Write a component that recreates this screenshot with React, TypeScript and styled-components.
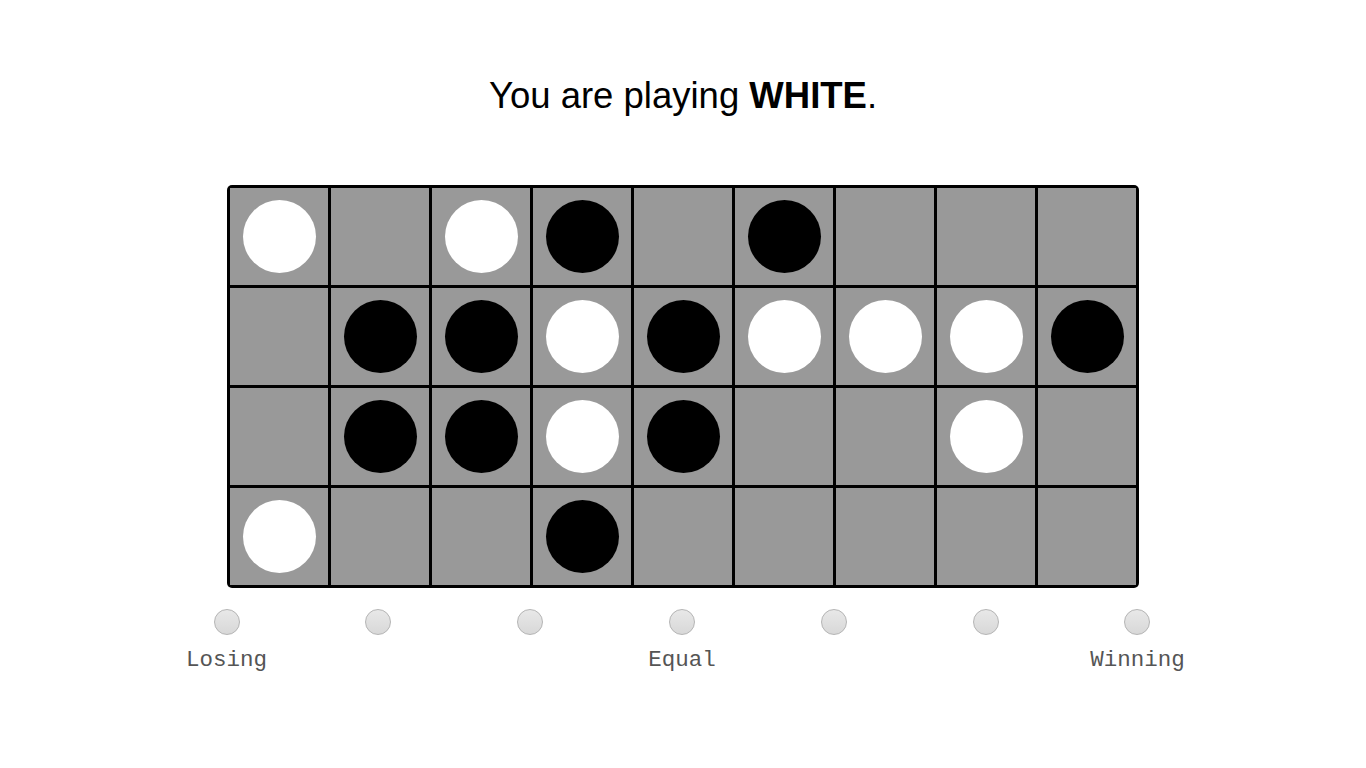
import React from 'react'
import styled, { createGlobalStyle } from 'styled-components'

const GlobalStyle = createGlobalStyle`
  html, body {
    margin: 0;
    padding: 0;
    background: #ffffff;
  }
  body {
    font-family: 'Liberation Sans', Arial, sans-serif;
  }
`

const Wrapper = styled.main`
  display: flex;
  flex-direction: column;
  align-items: center;
  width: 1366px;
  height: 768px;
  padding-top: 75px;
  box-sizing: border-box;
`

const Title = styled.h1`
  margin: 0 0 69px 0;
  font-size: 36.5px;
  font-weight: normal;
  line-height: 41px;
  color: #000;
  b {
    font-weight: bold;
  }
`

const Board = styled.div`
  display: grid;
  grid-template-columns: repeat(9, 98px);
  grid-template-rows: repeat(4, 97px);
  gap: 3px;
  padding: 3px;
  background: #000;
  border-radius: 5px;
`

const Cell = styled.div`
  display: flex;
  align-items: center;
  justify-content: center;
  background: #999999;
`

const Stone = styled.div<{ $color: 'w' | 'b' }>`
  width: 73px;
  height: 73px;
  border-radius: 50%;
  background: ${(p) => (p.$color === 'w' ? '#ffffff' : '#000000')};
`

const Meter = styled.div`
  display: flex;
  justify-content: space-between;
  width: 1011px;
  margin-top: 21px;
  margin-left: -2px;
`

const Slot = styled.div`
  display: flex;
  flex-direction: column;
  align-items: center;
  width: 100px;
`

const Dot = styled.div`
  width: 24px;
  height: 24px;
  border-radius: 50%;
  border: 1px solid #b4b4b4;
  background: linear-gradient(#e8e8e8, #d8d8d8);
`

const Label = styled.span`
  margin-top: 12px;
  font-family: 'Liberation Mono', 'Courier New', monospace;
  font-size: 22.5px;
  line-height: 26px;
  color: #555555;
  white-space: nowrap;
`

const rows = [
  'w.wb.b...',
  '.bbwbwwwb',
  '.bbwb..w.',
  'w..b.....',
]

const labels: Record<number, string> = { 0: 'Losing', 3: 'Equal', 6: 'Winning' }

export default function App() {
  return (
    <>
      <GlobalStyle />
      <Wrapper>
        <Title>
          You are playing <b>WHITE</b>.
        </Title>
        <Board>
          {rows.map((row, r) =>
            row.split('').map((c, i) => (
              <Cell key={`${r}-${i}`}>
                {c !== '.' && <Stone $color={c as 'w' | 'b'} />}
              </Cell>
            ))
          )}
        </Board>
        <Meter>
          {Array.from({ length: 7 }).map((_, i) => (
            <Slot key={i}>
              <Dot />
              {labels[i] && <Label>{labels[i]}</Label>}
            </Slot>
          ))}
        </Meter>
      </Wrapper>
    </>
  )
}
